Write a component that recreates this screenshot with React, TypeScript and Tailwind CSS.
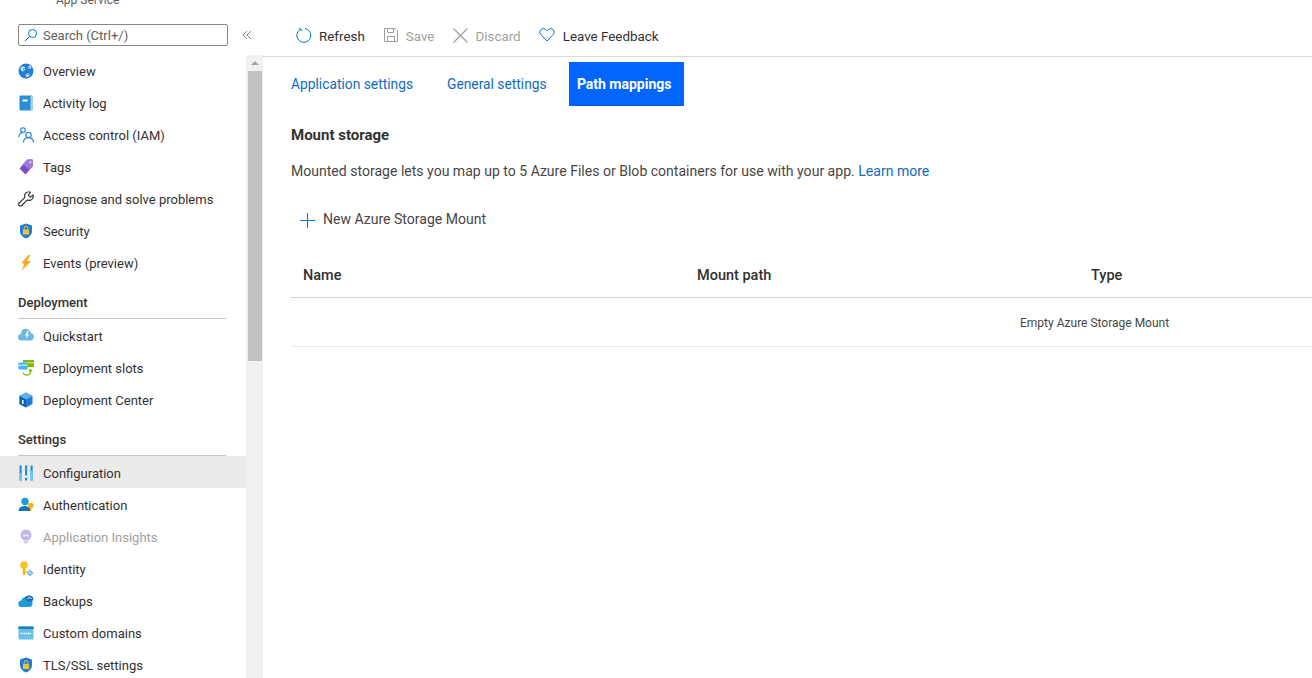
import type { ReactNode } from "react";

// Azure portal blade: App Service > Configuration > Path mappings

const FONT = "font-['Roboto','Noto_Sans',sans-serif]";

function Ic({ children }: { children: ReactNode }) {
  return (
    <svg width="16" height="16" viewBox="0 0 16 16" fill="none" aria-hidden className="shrink-0">
      {children}
    </svg>
  );
}

const icons: Record<string, ReactNode> = {
  overview: (
    <Ic>
      <circle cx="8" cy="8" r="7.5" fill="#1f7fd6" />
      <circle cx="5" cy="6" r="2.4" fill="#cfe6f8" />
      <circle cx="11.500" cy="4.500" r="1.700" fill="#cfe6f8" />
      <circle cx="9.500" cy="12" r="2" fill="#cfe6f8" />
      <path d="M5 6 11.500 4.500 9.500 12z" stroke="#1f7fd6" strokeWidth=".8" />
    </Ic>
  ),
  log: (
    <Ic>
      <rect x="1.500" y="0.500" width="13" height="15" rx="1" fill="#2b8fd8" />
      <rect x="12.500" y="0.500" width="2" height="15" fill="#a9cfec" />
      <rect x="4.500" y="4.500" width="5" height="2" fill="#fff" />
    </Ic>
  ),
  iam: (
    <Ic>
      <circle cx="5" cy="3" r="2.300" stroke="#1f7fd6" strokeWidth="1.100" />
      <path d="M.7 10c0-2.500 2-4.400 4.300-4.400" stroke="#1f7fd6" strokeWidth="1.100" />
      <circle cx="10.500" cy="8" r="2.700" stroke="#1f7fd6" strokeWidth="1.100" />
      <path d="M5.500 15.500c0-3 2.200-4.800 5-4.800s5 1.800 5 4.800" stroke="#1f7fd6" strokeWidth="1.100" />
    </Ic>
  ),
  tags: (
    <Ic>
      <path d="M9.500 .5h5L15 7l-7.500 8.500L1.500 9.500z" fill="#7a4fc9" />
      <path d="M9.500 .5h5L15 7 11 10.500 5 5z" fill="#a07ae0" />
      <circle cx="12.300" cy="3.200" r="1" fill="#e6dcf8" />
    </Ic>
  ),
  wrench: (
    <Ic>
      <path
        d="M10.500.8a4 4 0 0 0-3.600 5.500L1.200 12a1.700 1.700 0 0 0 2.500 2.500l5.700-5.600A4 4 0 0 0 15 4l-2.500 2.200-2.200-2 2.200-3A4 4 0 0 0 10.500.8z"
        stroke="#323130"
        strokeWidth="1.100"
        strokeLinejoin="round"
      />
    </Ic>
  ),
  security: (
    <Ic>
      <path d="M8 .5 14 2.500V8c0 4-3 6.300-6 7.500C5 14.300 2 12 2 8V2.500z" fill="#1f7fd6" />
      <rect x="5" y="6.500" width="6" height="5" rx=".5" fill="#f2c230" />
      <path d="M6.200 6.500V5a1.800 1.800 0 0 1 3.600 0v1.500" stroke="#f2c230" strokeWidth="1" />
    </Ic>
  ),
  events: (
    <Ic>
      <path d="M10.500 0 3 8.500h3.500L3.500 16 13 6H9L12.500 0z" fill="#f7a823" />
    </Ic>
  ),
  quickstart: (
    <Ic>
      <path d="M3.500 12.500a3.200 3.200 0 0 1-.5-6.400A4.800 4.800 0 0 1 12.700 5a3.800 3.800 0 0 1 0 7.500z" fill="#6cb8e0" />
      <path d="M9.800 2.500 7 7.500h1.800L8 11l3.200-4.800H9.300L10.800 2.500z" fill="#fff" />
    </Ic>
  ),
  slots: (
    <Ic>
      <rect x="5" y="0" width="11" height="7" fill="#7fba00" />
      <rect x="5" y="2" width="11" height="1.500" fill="#b8dc70" />
      <rect x="0.500" y="2.500" width="9" height="7" fill="#3fb5e8" />
      <rect x="0.500" y="4.500" width="9" height="1.500" fill="#b3e2f6" />
      <path d="M5 12.500a4 4 0 0 0 7.500 0M12.500 12.500V9.500M12.500 9.500l-1.800 1.800M12.500 9.500l1.800 1.800" stroke="#7fba00" strokeWidth="1.100" />
    </Ic>
  ),
  center: (
    <Ic>
      <path d="M8 .5 14.500 4v8L8 15.500 1.500 12V4z" fill="#1f7fd6" />
      <path d="M8 .5 14.500 4 8 7.500 1.500 4z" fill="#5fb0ec" />
      <path d="M8 7.500v8L1.500 12V4z" fill="#0f62b0" />
      <rect x="4" y="8" width="1.500" height="4" fill="#fff" />
    </Ic>
  ),
  config: (
    <Ic>
      <rect x="1.500" y="0.500" width="2.200" height="15" fill="#1f8fe0" />
      <rect x="7" y="0.500" width="2.200" height="15" fill="#1f8fe0" />
      <rect x="12.500" y="0.500" width="2.200" height="15" fill="#1f8fe0" />
      <rect x="1.500" y="8" width="2.200" height="7.500" fill="#5fd0f2" />
      <rect x="7" y="10.500" width="2.200" height="2" fill="#fff" />
      <rect x="12.500" y="6" width="2.200" height="9.500" fill="#5fd0f2" />
    </Ic>
  ),
  auth: (
    <Ic>
      <circle cx="7" cy="4.500" r="3.700" fill="#1aa0d8" />
      <path d="M.5 14c0-3.500 2.800-5 6-5s6 1.500 6 5z" fill="#1277b8" />
      <circle cx="12.800" cy="8.500" r="2.800" fill="#f4b619" />
      <rect x="12" y="10" width="1.500" height="4" fill="#f4b619" />
    </Ic>
  ),
  insights: (
    <Ic>
      <circle cx="8" cy="6" r="5.500" fill="#c5b3ea" />
      <rect x="5.500" y="11.500" width="5" height="3" rx="1" fill="#d6d3d1" />
      <path d="M6 5v3M10 5v3M6 6.500h4" stroke="#fff" strokeWidth=".8" />
    </Ic>
  ),
  identity: (
    <Ic>
      <circle cx="6" cy="4" r="3.800" fill="#f7c51e" />
      <rect x="4.800" y="6" width="2.600" height="8" fill="#f0b810" />
      <rect x="7" y="10" width="2" height="1.400" fill="#f0b810" />
      <path d="m12 8.500 3.500 3.500-3.500 3.500L8.500 12z" fill="#7ab4e0" />
      <circle cx="12" cy="12" r="1.100" fill="#d8ecfa" />
    </Ic>
  ),
  backups: (
    <Ic>
      <path d="M3.800 14a3.300 3.300 0 0 1-.4-6.600A4.500 4.500 0 0 1 12 7a3.600 3.600 0 0 1-.4 7z" fill="#1f9ad8" />
      <path d="M7 4.500a4 4 0 0 1 4-2 4 4 0 0 1 4.500 3.500 3 3 0 0 1-3 2.500H9z" fill="#1a6fc2" />
      <path d="M9.500 6l2-2 2 2" stroke="#fff" strokeWidth="1" />
    </Ic>
  ),
  domains: (
    <Ic>
      <rect x="0.500" y="1.500" width="15" height="13" fill="#66c0e8" />
      <rect x="0.500" y="1.500" width="15" height="2.500" fill="#1e7fb8" />
      <path d="M2.500 8.500h11" stroke="#fff" strokeWidth="1.500" strokeDasharray="1.200 .6" />
    </Ic>
  ),
  tls: (
    <Ic>
      <path d="M8 .5 14 2.500V8c0 4-3 6.300-6 7.500C5 14.300 2 12 2 8V2.500z" fill="#1f7fd6" />
      <rect x="5" y="7" width="6" height="5" rx=".5" fill="#f2c230" />
      <path d="M6.200 7V5.500a1.800 1.800 0 0 1 3.600 0V7" stroke="#f2c230" strokeWidth="1" />
    </Ic>
  ),
};

// low: the settings group sits a pixel lower inside its row in the reference
function NavRow({ icon, label, active, dim, low }: { icon: string; label: string; active?: boolean; dim?: boolean; low?: boolean }) {
  return (
    <div className={`flex h-8 items-center gap-[9px] pl-[18px] ${low ? "pt-[2px]" : ""} ${active ? "bg-[#edebe9]" : ""}`}>
      {icons[icon]}
      <span className={`pt-[2px] ${dim ? "text-[#a19f9d]" : "text-[#323130]"}`}>{label}</span>
    </div>
  );
}

function NavHeading({ label, className }: { label: string; className?: string }) {
  return (
    <div className={`mr-5 ml-[18px] flex h-10 items-end border-b border-[#c8c6c4] pb-[6px] font-medium text-[#323130] ${className ?? ""}`}>
      {label}
    </div>
  );
}

function ToolButton({ icon, label, dim, className }: { icon: ReactNode; label: string; dim?: boolean; className?: string }) {
  return (
    <div className={`flex items-center ${className ?? ""}`}>
      {icon}
      <span className={`pt-[4px] ${dim ? "text-[#a19f9d]" : "text-[#323130]"}`}>{label}</span>
    </div>
  );
}

export default function App() {
  return (
    <div className={`flex h-[678px] w-[1312px] overflow-hidden bg-white text-[13px] ${FONT}`}>
      <aside className="flex w-[263px] shrink-0 flex-col">
        <div className="h-[24px] overflow-hidden">
          <p className="-mt-[7px] pl-[56px] text-[12px] leading-[14px] text-[#605e5c]">App Service</p>
        </div>
        <div className="flex h-[31px] items-start">
          <div className="ml-[18px] flex h-[22px] w-[210px] items-center gap-[5px] rounded-[2px] border border-[#8a8886] pl-[5px] text-[#605e5c]">
            <svg width="14" height="14" viewBox="0 0 14 14" fill="none" aria-hidden>
              <circle cx="8.500" cy="5.500" r="4" stroke="#0078d4" />
              <path d="M5.500 8.500 1 13" stroke="#0078d4" />
            </svg>
            <span className="pt-[2px]">Search (Ctrl+/)</span>
          </div>
          <svg width="10" height="10" viewBox="0 0 10 10" fill="none" className="mt-[6px] ml-[14px]" aria-hidden>
            <path d="M5 1 1 5l4 4M9 1 5 5l4 4" stroke="#8a8886" />
          </svg>
        </div>
        <div className="flex min-h-0 flex-1">
          <nav className="w-[246px] shrink-0">
            <NavRow icon="overview" label="Overview" />
            <NavRow icon="log" label="Activity log" />
            <NavRow icon="iam" label="Access control (IAM)" />
            <NavRow icon="tags" label="Tags" />
            <NavRow icon="wrench" label="Diagnose and solve problems" />
            <NavRow icon="security" label="Security" />
            <NavRow icon="events" label="Events (preview)" />
            <NavHeading label="Deployment" className="mb-px" />
            <NavRow icon="quickstart" label="Quickstart" />
            <NavRow icon="slots" label="Deployment slots" />
            <NavRow icon="center" label="Deployment Center" />
            <NavHeading label="Settings" />
            <NavRow icon="config" label="Configuration" active low />
            <NavRow icon="auth" label="Authentication" low />
            <NavRow icon="insights" label="Application Insights" dim low />
            <NavRow icon="identity" label="Identity" low />
            <NavRow icon="backups" label="Backups" low />
            <NavRow icon="domains" label="Custom domains" low />
            <NavRow icon="tls" label="TLS/SSL settings" low />
          </nav>
          <div className="flex w-[17px] flex-col items-center bg-[#f1f1f1]">
            <div className="mt-[6px] h-0 w-0 border-x-[4px] border-b-[4px] border-x-transparent border-b-[#a3a3a3]" />
            <div className="mt-[6px] h-[290px] w-[14px] bg-[#c1c1c1]" />
          </div>
        </div>
      </aside>

      <main className="min-w-0 flex-1">
        <div className="flex h-[57px] items-center border-b border-[#d9d9d9] pt-[15px] pl-[32px] text-[13.4px]">
          <ToolButton
            label="Refresh"
            className="gap-[7px]"
            icon={
              <svg width="17" height="17" viewBox="0 0 17 17" fill="none" aria-hidden>
                <path d="M5 2.500a7 7 0 1 0 5-1M5 .5v2.500h2.500" stroke="#0078d4" strokeWidth="1" />
              </svg>
            }
          />
          <ToolButton
            label="Save"
            dim
            className="ml-[18px] gap-[7px]"
            icon={
              <svg width="16" height="16" viewBox="0 0 16 16" fill="none" aria-hidden>
                <path d="M1.500 1.500h10.500l2.500 2.500v10.500h-13z" stroke="#a19f9d" />
                <path d="M4.500 1.500v4h6v-4M4.500 14.500v-5h7v5" stroke="#a19f9d" />
              </svg>
            }
          />
          <ToolButton
            label="Discard"
            dim
            className="ml-[18px] gap-[6px]"
            icon={
              <svg width="17" height="17" viewBox="0 0 17 17" fill="none" aria-hidden>
                <path d="m1.500 1.500 14 14M15.500 1.500l-14 14" stroke="#a19f9d" strokeWidth="1.200" />
              </svg>
            }
          />
          <ToolButton
            label="Leave Feedback"
            className="ml-[18px] gap-[8px]"
            icon={
              <svg width="16" height="16" viewBox="0 0 16 16" fill="none" aria-hidden>
                <path d="M8 14 1.800 7.600a3.700 3.700 0 0 1 0-5 3.500 3.500 0 0 1 5 0L8 3.800l1.200-1.200a3.500 3.500 0 0 1 5 0 3.700 3.700 0 0 1 0 5z" stroke="#0078d4" />
              </svg>
            }
          />
        </div>

        <div className="flex h-[49px] items-start pt-[5px] pl-[28px] text-[13.8px]">
          <div className="flex h-[44px] items-center text-[#0f6cbd]">Application settings</div>
          <div className="ml-[34px] flex h-[44px] items-center text-[#0f6cbd]">General settings</div>
          <div className="relative ml-[22px] flex h-[44px] w-[115px] items-center justify-center bg-[#0066ff] pr-[4px] text-[14px] font-bold text-white">
            Path mappings
            <div className="absolute inset-x-2 bottom-0 h-px bg-[#0050c8]" />
          </div>
        </div>

        <div className="pt-[19px] pl-[28px] text-[14.05px]">
          <h2 className="text-[15px] leading-5 font-bold text-[#323130]">Mount storage</h2>
          <p className="mt-[16px] leading-5 text-[#484644]">
            Mounted storage lets you map up to 5 Azure Files or Blob containers for use with your app.{" "}
            <span className="text-[#0f6cbd]">Learn more</span>
          </p>
          <div className="mt-[29px] flex h-5 items-center gap-[8px] pl-[9px] text-[#484644]">
            <svg width="15" height="16" viewBox="0 0 15 16" fill="none" aria-hidden>
              <path d="M7.500 1v15M0 8.500h15" stroke="#0078d4" />
            </svg>
            New Azure Storage Mount
          </div>

          <div className="mt-[24px] w-[1182px]">
            <div className="grid h-[44px] grid-cols-3 items-center border-b border-[#cdd3dc] text-[14.500px] font-medium text-[#323130]">
              <div className="pl-3">Name</div>
              <div className="pl-3">Mount path</div>
              <div className="pl-3">Type</div>
            </div>
            <div className="flex h-[49px] items-center border-b border-[#edebe9] pt-[2px] pl-[729px] text-[12px] text-[#484644]">
              Empty Azure Storage Mount
            </div>
          </div>
        </div>
      </main>
    </div>
  );
}
